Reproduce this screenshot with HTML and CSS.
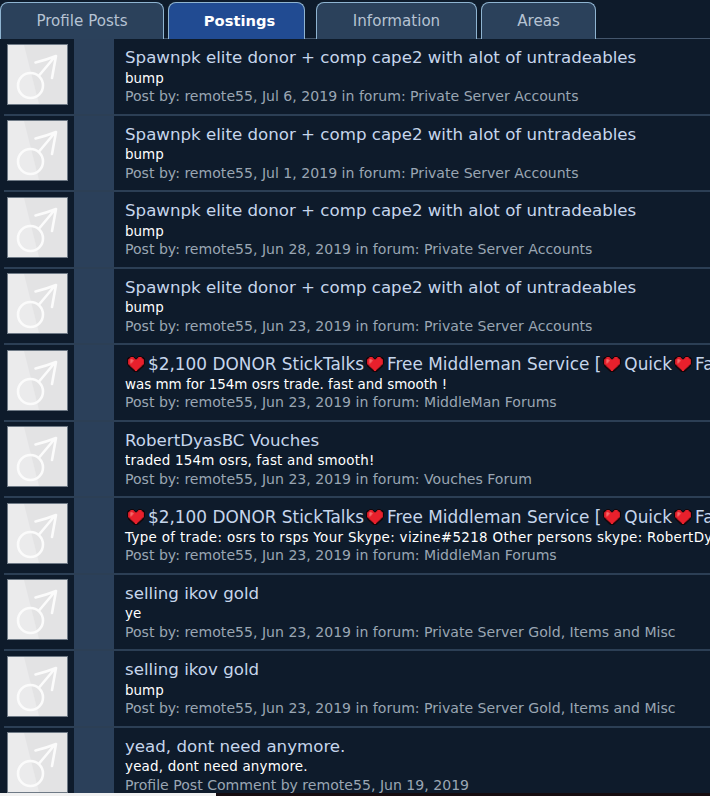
FILE: index.html
```html
<!DOCTYPE html>
<html lang="en">
<head>
  <meta charset="UTF-8">
  <title>Postings</title>
  <link rel="stylesheet" href="styles.css">
</head>
<body>
<svg class="defs" width="0" height="0">
  <defs>
    <symbol id="avatar" viewBox="0 0 59 59">
      <rect width="59" height="59" fill="#e3e3e4"/>
      <polygon points="0,0 16,0 31,59 0,59" fill="#ebebec"/>
      <circle cx="22.500" cy="40.500" r="12.500" fill="none" stroke="#fbfbfb" stroke-width="2.600"/>
      <path d="M31.500 30 Q40 20 47 11.500 M27.500 17.500 Q38 15 48 11 Q46 22 44 33" fill="none" stroke="#fbfbfb" stroke-width="2.600" stroke-linecap="round" stroke-linejoin="round"/>
    </symbol>
    <symbol id="heart" viewBox="1 0 16 15" preserveAspectRatio="none">
      <path d="M4 0h3v1h1v1h2V1h1V0h3v1h2v1h1v6h-1v2h-1v1h-1v1h-1v1h-1v1h-1v1h-1v1H8v-1H7v-1H6v-1H5v-1H4v-1H3v-1H2V8H1V2h1V1h2z" fill="#14060a"/>
      <path d="M4 1h3v1h1v1h2V2h1V1h3v1h1v1h1v5h-1v1h-1v1h-1v1h-1v1h-1v1h-1v1H8v-1H7v-1H6v-1H5v-1H4v-1H3V8H2V3h1V2h1z" fill="#e8202c"/>
      <path d="M4 3h2v1h1v1H6v1H5v1H4z" fill="#f46a6a"/>
    </symbol>
  </defs>
</svg>

<div class="tabs">
  <a class="tab">Profile Posts</a>
  <a class="tab tab-active">Postings</a>
  <a class="tab tab-info">Information</a>
  <a class="tab tab-areas">Areas</a>
</div>

<ul class="results">
  <li class="row">
    <div class="avatar"><svg><use href="#avatar"/></svg></div>
    <div class="strip"></div>
    <div class="info">
      <h3 class="title">Spawnpk elite donor + comp cape2 with alot of untradeables</h3>
      <p class="snippet">bump</p>
      <p class="meta">Post by: remote55, Jul 6, 2019 in forum: Private Server Accounts</p>
    </div>
  </li>
  <li class="row">
    <div class="avatar"><svg><use href="#avatar"/></svg></div>
    <div class="strip"></div>
    <div class="info">
      <h3 class="title">Spawnpk elite donor + comp cape2 with alot of untradeables</h3>
      <p class="snippet">bump</p>
      <p class="meta">Post by: remote55, Jul 1, 2019 in forum: Private Server Accounts</p>
    </div>
  </li>
  <li class="row">
    <div class="avatar"><svg><use href="#avatar"/></svg></div>
    <div class="strip"></div>
    <div class="info">
      <h3 class="title">Spawnpk elite donor + comp cape2 with alot of untradeables</h3>
      <p class="snippet">bump</p>
      <p class="meta">Post by: remote55, Jun 28, 2019 in forum: Private Server Accounts</p>
    </div>
  </li>
  <li class="row">
    <div class="avatar"><svg><use href="#avatar"/></svg></div>
    <div class="strip"></div>
    <div class="info">
      <h3 class="title">Spawnpk elite donor + comp cape2 with alot of untradeables</h3>
      <p class="snippet">bump</p>
      <p class="meta">Post by: remote55, Jun 23, 2019 in forum: Private Server Accounts</p>
    </div>
  </li>
  <li class="row">
    <div class="avatar"><svg><use href="#avatar"/></svg></div>
    <div class="strip"></div>
    <div class="info">
      <h3 class="title title-hearts"><svg class="heart"><use href="#heart"/></svg>$2,100 DONOR StickTalks<svg class="heart"><use href="#heart"/></svg>Free Middleman Service [<svg class="heart"><use href="#heart"/></svg>Quick<svg class="heart"><use href="#heart"/></svg>Fast</h3>
      <p class="snippet">was mm for 154m osrs trade. fast and smooth !</p>
      <p class="meta">Post by: remote55, Jun 23, 2019 in forum: MiddleMan Forums</p>
    </div>
  </li>
  <li class="row">
    <div class="avatar"><svg><use href="#avatar"/></svg></div>
    <div class="strip"></div>
    <div class="info">
      <h3 class="title">RobertDyasBC Vouches</h3>
      <p class="snippet snippet-loose">traded 154m osrs, fast and smooth!</p>
      <p class="meta">Post by: remote55, Jun 23, 2019 in forum: Vouches Forum</p>
    </div>
  </li>
  <li class="row">
    <div class="avatar"><svg><use href="#avatar"/></svg></div>
    <div class="strip"></div>
    <div class="info">
      <h3 class="title title-hearts"><svg class="heart"><use href="#heart"/></svg>$2,100 DONOR StickTalks<svg class="heart"><use href="#heart"/></svg>Free Middleman Service [<svg class="heart"><use href="#heart"/></svg>Quick<svg class="heart"><use href="#heart"/></svg>Fast</h3>
      <p class="snippet snippet-wide">Type of trade: osrs to rsps Your Skype: vizine#5218 Other persons skype: RobertDyas</p>
      <p class="meta">Post by: remote55, Jun 23, 2019 in forum: MiddleMan Forums</p>
    </div>
  </li>
  <li class="row">
    <div class="avatar"><svg><use href="#avatar"/></svg></div>
    <div class="strip"></div>
    <div class="info">
      <h3 class="title">selling ikov gold</h3>
      <p class="snippet">ye</p>
      <p class="meta">Post by: remote55, Jun 23, 2019 in forum: Private Server Gold, Items and Misc</p>
    </div>
  </li>
  <li class="row">
    <div class="avatar"><svg><use href="#avatar"/></svg></div>
    <div class="strip"></div>
    <div class="info">
      <h3 class="title">selling ikov gold</h3>
      <p class="snippet">bump</p>
      <p class="meta">Post by: remote55, Jun 23, 2019 in forum: Private Server Gold, Items and Misc</p>
    </div>
  </li>
  <li class="row">
    <div class="avatar"><svg><use href="#avatar"/></svg></div>
    <div class="strip"></div>
    <div class="info">
      <h3 class="title">yead, dont need anymore.</h3>
      <p class="snippet snippet-loose">yead, dont need anymore.</p>
      <p class="meta">Profile Post Comment by remote55, Jun 19, 2019</p>
    </div>
  </li>
</ul>

<div class="scrollbar"><div class="scroll-thumb"></div></div>
</body>
</html>
```

FILE: styles.css
```css
html, body {
  height: 100%;
}

body {
  margin: 0;
  background-color: #0e1b2b;
  font-family: "DejaVu Sans", Verdana, sans-serif;
  overflow: hidden;
  position: relative;
}

.defs {
  display: block;
  height: 0;
}

.tabs {
  display: flex;
  align-items: flex-end;
  height: 39px;
  box-sizing: border-box;
  padding-top: 2px;
  gap: 4px;
  border-bottom: 1px solid #44566c;
}

.tab {
  display: flex;
  align-items: center;
  justify-content: center;
  flex: none;
  box-sizing: border-box;
  width: 164px;
  height: 37px;
  margin-bottom: -1px;
  background-color: #2b415b;
  border: 1px solid #8fb4d1;
  border-bottom: none;
  border-radius: 8px 8px 0 0;
  color: #b6c3d3;
  font-size: 15.100px;
  white-space: nowrap;
}

.tab-active {
  width: 137px;
  padding: 0 0 2px 6px;
  background-color: #214b92;
  color: #ffffff;
  font-size: 14.700px;
  font-weight: bold;
}

.tab-info {
  width: 161px;
  margin-left: 7px;
}

.tab-areas {
  width: 115px;
}

.results {
  list-style: none;
  margin: 0;
  padding: 0;
}

.row {
  display: flex;
  height: 76.500px;
  box-sizing: border-box;
  position: relative;
}

/* separator runs across the strip too */
.row::after {
  content: "";
  position: absolute;
  left: 4px;
  right: 0;
  bottom: 0;
  height: 2px;
  background-color: #2c3f55;
}

.avatar {
  box-sizing: border-box;
  width: 74px;
  padding: 4.900px 0 0 7px;
}

.avatar svg {
  display: block;
  box-sizing: border-box;
  width: 61px;
  height: 61px;
  border: 1px solid #6f7a86;
}

.strip {
  width: 40px;
  background-color: #2b405a;
}

.info {
  flex: 1;
  min-width: 0;
  padding: 8px 0 0 11px;
  white-space: nowrap;
  overflow: hidden;
}

.title {
  margin: 0;
  font-size: 16.650px;
  font-weight: normal;
  line-height: 22.500px;
  color: #c6d6ec;
}

.title-hearts {
  font-size: 16.900px;
}

.heart {
  display: inline-block;
  width: 18px;
  height: 16px;
  vertical-align: -2px;
  margin: 0 3px 0 2px;
}

.snippet {
  margin: 0;
  font-size: 13.450px;
  line-height: 17.500px;
  color: #ffffff;
}

.snippet-loose {
  letter-spacing: 0.200px;
}

.snippet-wide {
  letter-spacing: 0.330px;
}

.meta {
  margin: 0;
  font-size: 14.080px;
  line-height: 18px;
  color: #9aa6b3;
}

.scrollbar {
  position: absolute;
  left: 0;
  right: 0;
  bottom: 0;
  height: 3px;
  background-color: #160d10;
}

.scroll-thumb {
  width: 216px;
  height: 100%;
  background-color: #f1f1f1;
}
```
